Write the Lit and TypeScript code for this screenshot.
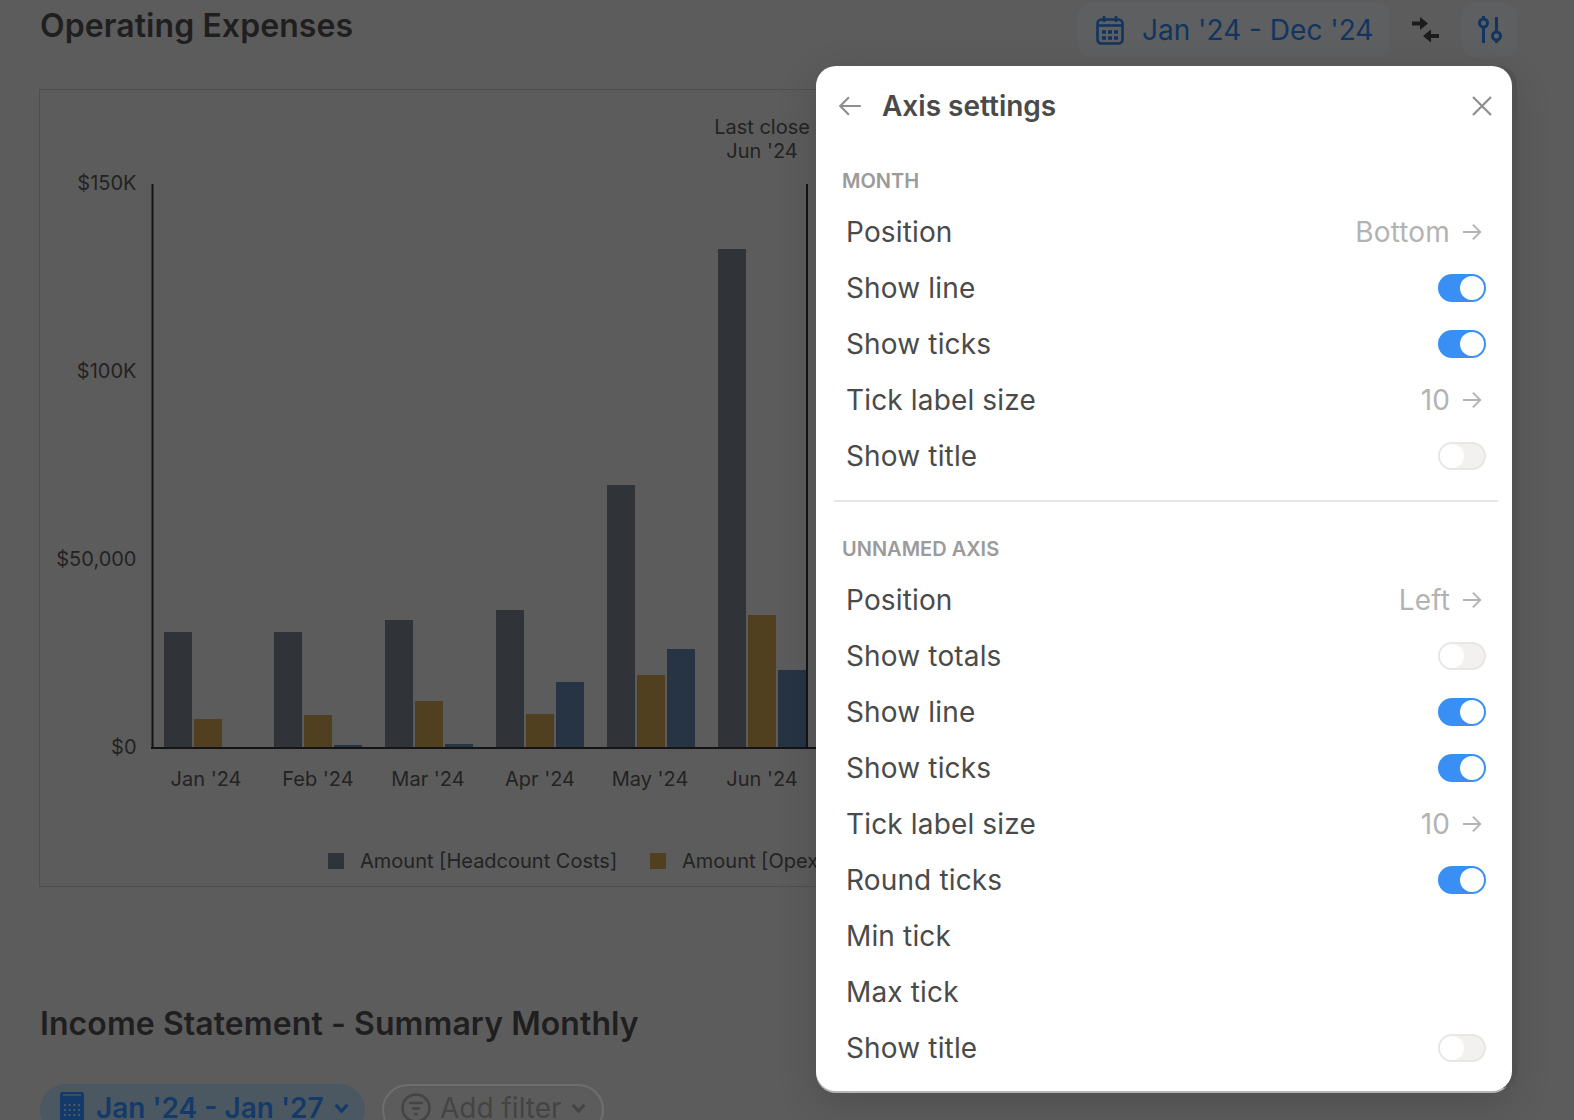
import { LitElement, css, html, svg } from 'lit';
import { customElement } from 'lit/decorators.js';

type Row = { label: string; value?: string; on?: boolean };

const MONTH_ROWS: Row[] = [
  { label: 'Position', value: 'Bottom' },
  { label: 'Show line', on: true },
  { label: 'Show ticks', on: true },
  { label: 'Tick label size', value: '10' },
  { label: 'Show title', on: false },
];

const AXIS_ROWS: Row[] = [
  { label: 'Position', value: 'Left' },
  { label: 'Show totals', on: false },
  { label: 'Show line', on: true },
  { label: 'Show ticks', on: true },
  { label: 'Tick label size', value: '10' },
  { label: 'Round ticks', on: true },
  { label: 'Min tick' },
  { label: 'Max tick' },
  { label: 'Show title', on: false },
];

// bar tops per month: headcount, opex, third series
const BARS = [
  { label: "Jan '24", cx: 206, x: 164, tops: [632, 719, 748] },
  { label: "Feb '24", cx: 318, x: 274, tops: [632, 715, 745] },
  { label: "Mar '24", cx: 428, x: 385, tops: [620, 701, 744] },
  { label: "Apr '24", cx: 540, x: 496, tops: [610, 714, 682] },
  { label: "May '24", cx: 650, x: 607, tops: [485, 675, 649] },
  { label: "Jun '24", cx: 762, x: 718, tops: [249, 615, 670] },
];

const BAR_COLORS = ['#303439', '#514020', '#273444'];
const TICKS = [
  { label: '$150K', y: 183 },
  { label: '$100K', y: 371 },
  { label: '$50,000', y: 559 },
  { label: '$0', y: 747 },
];

@customElement('app-root')
export class AppRoot extends LitElement {
  private _calendar() {
    return html`<svg class="calendar" viewBox="0 0 28 30" width="28" height="30" fill="none" stroke="currentColor" stroke-width="2.6">
      <rect x="1.5" y="4.5" width="25" height="24" rx="4"></rect>
      <path d="M1.5 10.500h25M8 1v6M20 1v6"></path>
      <path stroke-width="3.500" stroke-dasharray="4 2" d="M6 17h16M6 23h16"></path>
    </svg>`;
  }

  private _swap() {
    return html`<svg viewBox="0 0 30 30" width="30" height="30" fill="#1c1c1c">
      <path d="M1 6.500h8V2l8 6.500-8 6.500v-4.500H1z"></path>
      <path d="M28 19h-8v-4.500L12 21l8 6.500V23h8z"></path>
    </svg>`;
  }

  private _sliders() {
    return html`<svg viewBox="0 0 26 30" width="26" height="30" fill="none" stroke="currentColor" stroke-width="3">
      <path d="M6.500 1v3M6.500 12v16M19.500 2v15M19.500 25v3"></path>
      <circle cx="6.500" cy="8" r="4"></circle>
      <circle cx="19.500" cy="21" r="4"></circle>
    </svg>`;
  }

  private _arrow(dir: 'left' | 'right', size: number) {
    const d = dir === 'right' ? 'M2 12h19M13 4l8 8-8 8' : 'M22 12H3M11 4l-8 8 8 8';
    return html`<svg viewBox="0 0 24 24" width=${size} height=${size} fill="none" stroke="currentColor" stroke-width="2">
      <path d=${d}></path>
    </svg>`;
  }

  private _chevron() {
    return html`<svg class="chev" viewBox="0 0 14 10" width="15" height="11" fill="none" stroke="currentColor" stroke-width="3">
      <path d="M1.500 1.500 7 7.500l5.500-6"></path>
    </svg>`;
  }

  private _chart() {
    return html`<svg class="plot" width="1460" height="798" viewBox="40 89 1460 798">
      ${TICKS.map(
        (t) => svg`<text x="136.500" y=${t.y + 7} text-anchor="end">${t.label}</text>`,
      )}
      <text x="762" y="134" text-anchor="middle">Last close</text>
      <text x="762" y="158" text-anchor="middle">Jun '24</text>
      ${BARS.map((m) =>
        m.tops.map(
          (top, i) =>
            svg`<rect x=${m.x + i * 30} y=${top} width="28" height=${749 - top} fill=${BAR_COLORS[i]}></rect>`,
        ),
      )}
      <path d="M152.500 184V748M807 184V748M151 748H820" fill="none" stroke="#141414" stroke-width="2"></path>
      ${BARS.map(
        (m) => svg`<text x=${m.cx} y="786" text-anchor="middle">${m.label}</text>`,
      )}
      <rect x="328" y="853" width="16" height="16" fill="#303439"></rect>
      <text x="360" y="868">Amount [Headcount Costs]</text>
      <rect x="650" y="853" width="16" height="16" fill="#514020"></rect>
      <text x="682" y="868">Amount [Opex]</text>
    </svg>`;
  }

  private _row(row: Row) {
    return html`<div class="row">
      <span>${row.label}</span>
      ${row.value !== undefined
        ? html`<span class="value">${row.value}${this._arrow('right', 22)}</span>`
        : ''}
      ${row.on !== undefined
        ? html`<span class="toggle ${row.on ? 'on' : ''}"><i></i></span>`
        : ''}
    </div>`;
  }

  render() {
    return html`
      <main>
        <header>
          <h2>Operating Expenses</h2>
          <div class="tools">
            <div class="date">${this._calendar()}<span>Jan '24 - Dec '24</span></div>
            <div class="swap">${this._swap()}</div>
            <div class="sliders">${this._sliders()}</div>
          </div>
        </header>
        <section class="chart">${this._chart()}</section>
        <h2 class="second">Income Statement - Summary Monthly</h2>
        <div class="filters">
          <div class="pill range">
            <svg viewBox="0 0 24 32" width="24" height="32">
              <rect width="24" height="32" rx="3" fill="currentColor"></rect>
              <path d="M3 3h18" stroke="#4b5862" stroke-width="1.500"></path>
              <path d="M4 13h16M4 18h16M4 23h16" stroke="#4b5862" stroke-width="2" stroke-dasharray="2 2.670"></path>
            </svg>
            <span>Jan '24 - Jan '27</span>
            ${this._chevron()}
          </div>
          <div class="pill add">
            <svg viewBox="0 0 30 30" width="30" height="30" fill="none" stroke="currentColor" stroke-width="2.600">
              <circle cx="15" cy="15" r="13.500"></circle>
              <path d="M8 10h14M11 15.500h8M13 21h4"></path>
            </svg>
            <span>Add filter</span>
            ${this._chevron()}
          </div>
        </div>
      </main>
      <aside class="panel">
        <div class="panel-head">
          <span class="back">${this._arrow('left', 26)}</span>
          <h3>Axis settings</h3>
          <svg class="close" viewBox="0 0 20 20" width="20" height="20" fill="none" stroke="currentColor" stroke-width="2.200">
            <path d="M1 1l18 18M19 1L1 19"></path>
          </svg>
        </div>
        <div class="group first">
          <h4>MONTH</h4>
          ${MONTH_ROWS.map((r) => this._row(r))}
        </div>
        <hr />
        <div class="group">
          <h4>UNNAMED AXIS</h4>
          ${AXIS_ROWS.map((r) => this._row(r))}
        </div>
      </aside>
    `;
  }

  static styles = css`
    :host {
      display: block;
      position: relative;
      width: 1574px;
      height: 1120px;
      overflow: hidden;
      background: #5c5c5c;
      font-family: Inter, 'Noto Sans', sans-serif;
    }

    main {
      display: flex;
      flex-direction: column;
      padding: 3px 0 0 40px;
    }

    header {
      display: flex;
      justify-content: space-between;
      align-items: flex-start;
      height: 86px;
    }

    h2 {
      margin: 0;
      font-size: 32px;
      line-height: 46px;
      font-weight: 600;
      letter-spacing: 0.08px;
      color: #1f1f1f;
    }

    .tools {
      display: flex;
      align-items: center;
      height: 54px;
      padding-right: 57px;
      color: #123560;
    }

    .date {
      display: flex;
      align-items: center;
      gap: 18px;
      height: 54px;
      width: 312px;
      box-sizing: border-box;
      padding-left: 18px;
      background: #5d5f61;
      border-radius: 12px;
      font-size: 28px;
    }

    .swap {
      display: flex;
      margin-left: 21px;
    }

    .sliders {
      display: flex;
      justify-content: center;
      align-items: center;
      width: 55px;
      height: 54px;
      margin-left: 21px;
      background: #5d5f61;
      border-radius: 12px;
    }

    .chart {
      height: 798px;
      margin: 0 74px 0 -1px;
      box-sizing: border-box;
      border: 1px solid #4f4f4f;
      overflow: hidden;
    }

    .plot {
      display: block;
      margin-top: -1px;
    }

    .plot text {
      font-size: 20px;
      fill: #232323;
    }

    .second {
      margin-top: 114px;
    }

    .filters {
      display: flex;
      gap: 17px;
      margin-top: 37px;
    }

    .pill {
      display: flex;
      align-items: center;
      height: 52px;
      padding-bottom: 4px;
      box-sizing: border-box;
      border-radius: 26px;
      font-size: 28px;
    }

    .range {
      gap: 12px;
      width: 325px;
      padding-left: 20px;
      background: #4b5862;
      color: #143a69;
      font-weight: 600;
    }

    .range .chev {
      margin-left: -2px;
    }

    .add {
      gap: 9px;
      width: 222px;
      padding-left: 17px;
      border: 2px solid #6e6e6e;
      color: #444;
    }

    .panel {
      position: absolute;
      left: 816px;
      top: 66px;
      width: 696px;
      height: 1025px;
      box-sizing: border-box;
      background: #fff;
      border-radius: 20px;
      color: #4a4a4a;
      box-shadow:
        6px -1px 0 -1px #515151,
        0 2px 0 #b5b5b5,
        0 12px 40px rgba(0, 0, 0, 0.16);
    }

    .panel-head {
      display: flex;
      align-items: center;
      height: 80px;
      padding: 0 20px 0 21px;
    }

    .back {
      display: flex;
      color: #8e8e8e;
    }

    h3 {
      flex: 1;
      margin: 0 0 0 19px;
      font-size: 28px;
      font-weight: 600;
      color: #4a4a4a;
    }

    .close {
      color: #8e8e8e;
    }

    .group {
      padding: 0 26px;
    }

    .group.first {
      padding-top: 21px;
    }

    h4 {
      margin: 0 0 8px;
      font-size: 20px;
      line-height: 28px;
      font-weight: 600;
      color: #9b9b9b;
    }

    .group.first h4 {
      margin-bottom: 9px;
    }

    hr {
      margin: 16px 14px 33px 18px;
      border: 0;
      border-top: 2px solid #e6e6e4;
    }

    .row {
      display: flex;
      align-items: center;
      justify-content: space-between;
      height: 56.100px;
      padding-left: 4px;
      font-size: 28px;
      letter-spacing: 0.15px;
    }

    .value {
      display: flex;
      align-items: center;
      gap: 11px;
      padding-right: 3px;
      color: #b3b3b3;
    }

    .toggle {
      display: flex;
      justify-content: flex-start;
      width: 48px;
      height: 28px;
      box-sizing: border-box;
      border: 2px solid #e8e7e4;
      border-radius: 14px;
      background: #f2f1ef;
    }

    .toggle i {
      width: 24px;
      height: 24px;
      border-radius: 50%;
      background: #fff;
    }

    .toggle.on {
      justify-content: flex-end;
      border-color: #3a8ff5;
      background: #3a8ff5;
    }
  `;
}
